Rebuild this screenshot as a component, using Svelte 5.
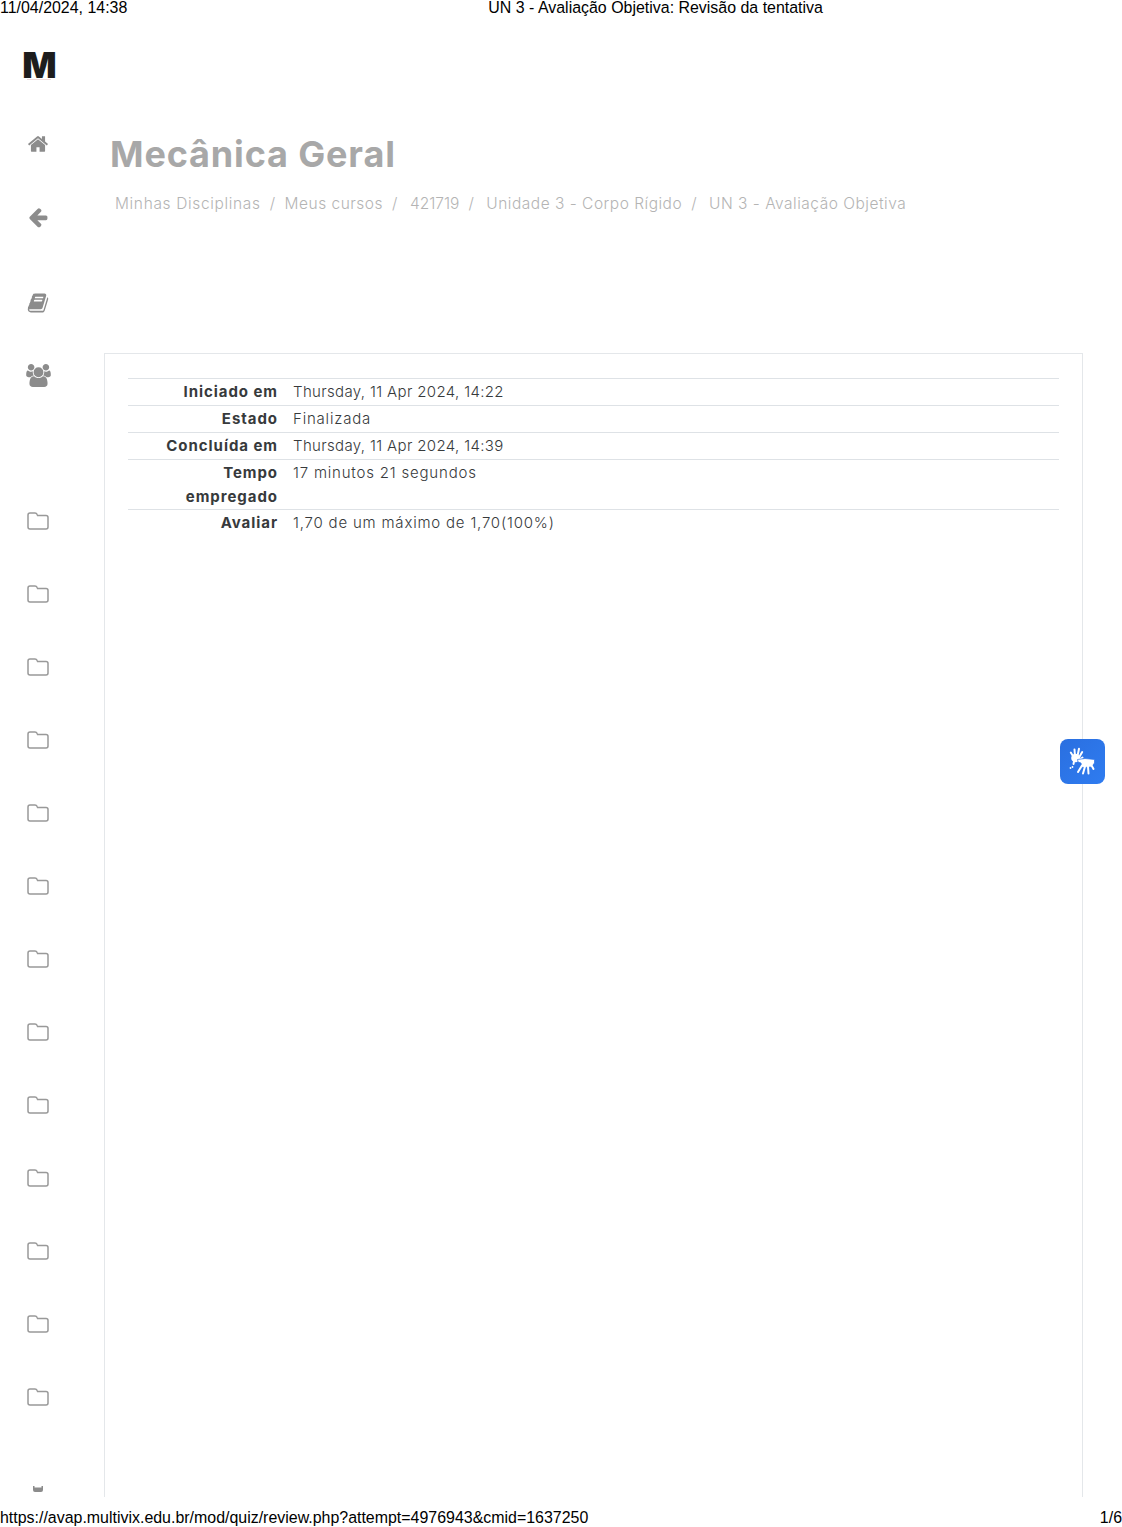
<script>
  const rows = [
    { label: "Iniciado em", value: "Thursday, 11 Apr 2024, 14:22", tight: true },
    { label: "Estado", value: "Finalizada" },
    { label: "Concluída em", value: "Thursday, 11 Apr 2024, 14:39", tight: true },
    { label: "Tempo empregado", value: "17 minutos 21 segundos" },
    { label: "Avaliar", value: "1,70 de um máximo de 1,70(100%)" },
  ];
  const crumbs = ["Minhas Disciplinas", "Meus cursos", "421719", "Unidade 3 - Corpo Rígido", "UN 3 - Avaliação Objetiva"];
  const folders = Array(13).fill(0);
</script>

<div class="page">
  <header class="print-head">
    <span>11/04/2024, 14:38</span>
    <span class="print-title">UN 3 - Avaliação Objetiva: Revisão da tentativa</span>
  </header>

  <div class="body">
    <nav class="side">
      <div class="logo">M</div>
      <svg class="ico home" viewBox="0 0 1792 1792"><path d="M1472 992v480q0 26-19 45t-45 19h-384v-384h-256v384h-384q-26 0-45-19t-19-45v-480q0-1 .5-3t.5-3l575-474 575 474q1 2 1 6zm223-69l-62 74q-8 9-21 11h-3q-13 0-21-7l-692-577-692 577q-12 8-24 7-13-2-21-11l-62-74q-8-10-7-23.500t11-21.500l719-599q32-26 76-26t76 26l244 204v-195q0-14 9-23t23-9h192q14 0 23 9t9 23v408l219 182q10 8 11 21.500t-7 23.500z"/></svg>
      <svg class="ico back" viewBox="0 0 1792 1792"><path d="M1664 896v128q0 53-32.500 90.500t-84.500 37.500h-704l293 294q38 36 38 90t-38 90l-75 76q-37 37-90 37-52 0-91-37l-651-652q-37-37-37-90 0-52 37-91l651-650q38-38 91-38 52 0 90 38l75 74q38 38 38 91t-38 91l-293 293h704q52 0 84.500 37.500t32.500 90.500z"/></svg>
      <svg class="ico book" viewBox="0 0 1792 1792"><path d="M1703 478q40 57 18 129l-275 906q-19 64-76.500 107.500t-122.500 43.500h-923q-77 0-148.500-53.500t-99.500-131.500q-24-67-2-127 0-4 3-27t4-37q1-8-3-21.500t-3-19.500q2-11 8-21t16.500-23.500 16.500-23.500q23-38 45-91.500t30-91.500q3-10 .5-30t-.5-28q3-11 17-28t17-23q21-36 42-92t25-90q1-9-2.500-32t.5-28q4-13 22-30.500t22-22.500q19-26 42.500-84.500t27.500-96.500q1-8-3-25.500t-2-26.500q2-8 9-18t18-23 17-21q8-12 16.500-30.500t15-35 16-36 19.500-32 26.500-23.500 36-11.500 47.500 5.500l-1 3q38-9 51-9h761q74 0 114 56t18 130l-274 906q-36 119-71.500 153.500t-128.500 34.500h-869q-27 0-38 15-11 16-1 43 24 70 144 70h923q29 0 56-15.500t35-41.500l300-987q7-22 5-57 38 15 59 43zm-1064 2q-4 13 2 22.500t20 9.500h608q13 0 25.500-9.500t16.500-22.500l21-64q4-13-2-22.500t-20-9.500h-608q-13 0-25.500 9.500t-16.500 22.500zm-83 256q-4 13 2 22.500t20 9.500h608q13 0 25.500-9.500t16.500-22.500l21-64q4-13-2-22.500t-20-9.500h-608q-13 0-25.500 9.500t-16.500 22.500z"/></svg>
      <svg class="ico users" viewBox="0 0 1920 1792"><path d="M593 896q-162 5-265 128h-134q-82 0-138-40.500t-56-118.500q0-353 124-353 6 0 43.500 21t97.500 42.500 119 21.500q67 0 133-23-5 37-5 66 0 139 81 256zm1071 637q0 120-73 189.500t-194 69.500h-874q-121 0-194-69.500t-73-189.500q0-53 3.500-103.500t14-109 26.500-108.500 43-97.500 62-81 85.500-53.500 111.500-20q10 0 43 21.500t73 48 107 48 135 21.500 135-21.500 107-48 73-48 43-21.500q61 0 111.500 20t85.500 53.500 62 81 43 97.500 26.500 108.500 14 109 3.500 103.500zm-1024-1277q0 106-75 181t-181 75-181-75-75-181 75-181 181-75 181 75 75 181zm704 384q0 159-112.500 271.500t-271.500 112.500-271.500-112.500-112.500-271.500 112.500-271.500 271.500-112.500 271.500 112.500 112.500 271.500zm576 225q0 78-56 118.500t-138 40.500h-134q-103-123-265-128 81-117 81-256 0-29-5-66 66 23 133 23 59 0 119-21.500t97.500-42.500 43.500-21q124 0 124 353zm-128-609q0 106-75 181t-181 75-181-75-75-181 75-181 181-75 181 75 75 181z"/></svg>
      <div class="folders">
        {#each folders as _}
          <svg class="folder" viewBox="0 0 22 18"><path d="M3 1h5q1.500 0 2 1.200l.6 1.300H19q2 0 2 2V15q0 2-2 2H3q-2 0-2-2V3q0-2 2-2z"/></svg>
        {/each}
        <svg class="sliver" viewBox="0 0 10 6"><path d="M0 0h1.500v1.500h7V0H10v4q0 2-2 2H2q-2 0-2-2z"/></svg>
      </div>
    </nav>

    <main class="content">
      <h1>Mecânica Geral</h1>
      <ol class="crumbs">
        {#each crumbs as c, i}
          <li class:first={i === 0} class:num={i === 2} class:wide={i >= 2}>{c}</li>
          {#if i < crumbs.length - 1}<li class="sep">/</li>{/if}
        {/each}
      </ol>

      <section class="card">
        <table>
          <tbody>
            {#each rows as r}
              <tr>
                <th>{r.label}</th>
                <td class:tight={r.tight}>{r.value}</td>
              </tr>
            {/each}
          </tbody>
        </table>
      </section>
    </main>

    <button class="vlibras" aria-label="VLibras">
      <svg viewBox="0 0 32 32" width="32" height="32">
        <g class="hand">
          <path d="M6.500 11 3.800 6.500M8 10 7.500 3.500M10.500 10 12 2.800M12 11.500 15.200 6M12 14l3.500-2.500"/>
          <circle cx="8.500" cy="12" r="4.300" />
          <path d="M7 15.500 6.500 18"/>
        </g>
        <path class="palm" d="M10.500 13.500 18 12.500 27.500 13.500 27.500 17 24.500 21 15 21.500 14 17 11 16z"/>
        <g class="hand">
          <path d="M15 19.500 11 26M18 20.500 16 27.500M21 20.500 21.500 27.500M24 18.500 26.500 23"/>
        </g>
        <circle cx="5.500" cy="21" r="0.900" fill="#fff"/>
        <circle cx="3.500" cy="22" r="0.900" fill="#fff"/>
      </svg>
    </button>
  </div>

  <footer class="print-foot">
    <span>https://avap.multivix.edu.br/mod/quiz/review.php?attempt=4976943&amp;cmid=1637250</span>
    <span>1/6</span>
  </footer>
</div>

<style>
  :global(body) {
    margin: 0;
    background: #fff;
  }
  .page {
    height: 1527px;
    display: flex;
    flex-direction: column;
    overflow: hidden;
    font-family: Inter, "Open Sans", sans-serif;
  }
  .print-head,
  .print-foot {
    font-family: "Liberation Sans", Arial, sans-serif;
    font-size: 15.95px;
    line-height: 16px;
    color: #000;
    display: flex;
  }
  .print-title {
    margin-left: 361px;
  }
  .print-foot {
    justify-content: space-between;
    box-sizing: border-box;
    padding-top: 13px;
    height: 30px;
  }
  .body {
    position: relative;
    flex: 1;
    min-height: 0;
    display: flex;
    overflow: hidden;
  }
  .side {
    width: 104px;
    flex: none;
    display: flex;
    flex-direction: column;
    align-items: flex-start;
  }
  .logo {
    position: relative;
    width: 76px;
    margin-top: 28px;
    height: 42px;
    text-align: center;
    font-size: 36px;
    line-height: 42px;
    font-weight: 900;
    color: #1d1d1d;
    box-sizing: border-box;
    padding-left: 3px;
  }
  .logo::after {
    content: "";
    position: absolute;
    left: 27px;
    top: 35px;
    width: 24px;
    height: 1px;
    background: #efdcdc;
  }
  .ico {
    fill: #8c8c8c;
    display: block;
    margin-left: 27px;
    width: 22px;
    height: 22px;
  }
  .home { margin-top: 47px; }
  .back { margin-top: 51px; }
  .book { margin-top: 64px; }
  .users { margin-top: 50px; width: 25px; height: 23px; margin-left: 26px; }
  .folders {
    margin-top: 125px;
    display: flex;
    flex-direction: column;
    gap: 55px;
    margin-left: 27px;
  }
  .folder {
    width: 22px;
    height: 18px;
    display: block;
    fill: none;
    stroke: #999;
    stroke-width: 1.5;
  }
  .sliver {
    width: 10px;
    height: 6px;
    display: block;
    margin: 25px 0 0 6px;
    fill: #8c8c8c;
  }
  .content {
    flex: 1;
    min-width: 0;
    display: flex;
    flex-direction: column;
    padding-right: 39px;
  }
  h1 {
    margin: 116px 0 0 6px;
    font-size: 36px;
    line-height: 44px;
    font-weight: 700;
    color: #a8a8a8;
    letter-spacing: 0.85px;
  }
  .crumbs {
    list-style: none;
    display: flex;
    margin: 16px 0 0 11px;
    padding: 0;
    font-size: 15.5px;
    line-height: 24px;
    font-weight: 300;
    color: #b4b4b4;
    gap: 9px;
    letter-spacing: 0.5px;
  }
  .crumbs .first {
    letter-spacing: 0.65px;
  }
  .crumbs .wide {
    margin-left: 3px;
  }
  .crumbs .num {
    letter-spacing: 0;
  }
  .card {
    flex: 1;
    margin-top: 137px;
    border: 1px solid #e4e7ea;
    border-bottom: 0;
    padding: 24px 23px 0;
    background: #fff;
  }
  table {
    width: 100%;
    border-collapse: collapse;
    font-size: 15px;
    line-height: 24px;
    color: #373a3c;
  }
  tr {
    border-top: 1px solid #dee2e6;
  }
  th {
    width: 150px;
    padding: 1px 15px 1px 0;
    text-align: right;
    vertical-align: top;
    font-weight: 700;
    line-height: 23.5px;
    letter-spacing: 0.95px;
  }
  td {
    padding: 1px 0;
    vertical-align: top;
    font-weight: 300;
    letter-spacing: 0.8px;
  }
  td.tight {
    letter-spacing: 0.35px;
  }
  .vlibras {
    position: absolute;
    left: 1060px;
    top: 723px;
    width: 45px;
    height: 45px;
    border: 0;
    padding: 0;
    border-radius: 8px;
    background: linear-gradient(135deg, #2a6fe0, #2f7cf0);
    display: flex;
    align-items: center;
    justify-content: center;
  }
  .hand {
    fill: #fff;
    stroke: #fff;
    stroke-width: 2;
    stroke-linecap: round;
  }
  .hand circle {
    stroke: none;
  }
  .palm {
    fill: #fff;
    stroke: #2a72e6;
    stroke-width: 0.7;
    stroke-linejoin: round;
  }
</style>
